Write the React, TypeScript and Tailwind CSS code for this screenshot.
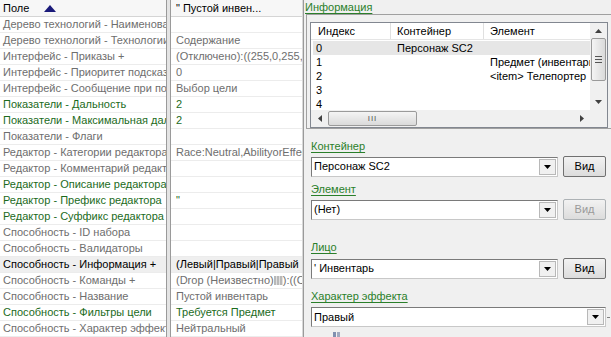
import React from 'react';

type Kind = 'gray' | 'green' | 'sel';

const rows: [string, React.ReactNode, Kind][] = [
  ['Дерево технологий - Наименование', '', 'gray'],
  ['Дерево технологий - Технологии', 'Содержание', 'gray'],
  ['Интерфейс - Приказы +', '(Отключено):((255,0,255,', 'gray'],
  ['Интерфейс - Приоритет подсказки', '0', 'gray'],
  ['Интерфейс - Сообщение при пол', 'Выбор цели', 'gray'],
  ['Показатели - Дальность', '2', 'green'],
  ['Показатели - Максимальная дальность', '2', 'green'],
  ['Показатели - Флаги', '', 'gray'],
  ['Редактор - Категории редактора', 'Race:Neutral,AbilityorEffect', 'gray'],
  ['Редактор - Комментарий редактора', '', 'gray'],
  ['Редактор - Описание редактора', '', 'green'],
  ['Редактор - Префикс редактора', '"', 'green'],
  ['Редактор - Суффикс редактора', '', 'green'],
  ['Способность - ID набора', '', 'gray'],
  ['Способность - Валидаторы', '', 'gray'],
  ['Способность - Информация +', '(Левый|Правый|Правый', 'sel'],
  [
    'Способность - Команды +',
    <>
      (Drop (Неизвестно)
      <span className="inline-block w-[9px] h-[9px] align-[-1px] bg-[repeating-linear-gradient(90deg,#b8b8b8_0px,#b8b8b8_2px,#e0e0e0_2px,#e0e0e0_3px)]" />
      ):((C
    </>,
    'gray',
  ],
  ['Способность - Название', 'Пустой инвентарь', 'gray'],
  ['Способность - Фильтры цели', 'Требуется Предмет', 'green'],
  ['Способность - Характер эффекта', 'Нейтральный', 'gray'],
];

const color = (k: Kind) =>
  k === 'green' ? 'text-[#1c6b1c]' : k === 'sel' ? 'text-black bg-[#efefef]' : 'text-[#6e6e6e]';

const Arrow = ({ dir }: { dir: 'up' | 'down' | 'left' | 'right' }) => {
  const pts = {
    up: '0,4 3.5,0 7,4',
    down: '0,0 3.5,4 7,0',
    left: '4,0 0,3.5 4,7',
    right: '0,0 4,3.5 0,7',
  }[dir];
  const vert = dir === 'up' || dir === 'down';
  return (
    <svg width={vert ? 7 : 4} height={vert ? 4 : 7} viewBox={vert ? '0 0 7 4' : '0 0 4 7'}>
      <polygon points={pts} fill="#404040" />
    </svg>
  );
};

const Combo = ({ value, wide }: { value: string; wide?: boolean }) => (
  <div className={`h-[20px] bg-white border border-[#7a7a7a] border-r-[#c8c8c8] border-b-[#c8c8c8] flex items-center ${wide ? 'w-[295px]' : 'w-[247px]'}`}>
    <div className="flex-1 pl-[2px] text-black whitespace-nowrap overflow-hidden">{value}</div>
    <div className="w-[17px] h-[16px] mr-[1px] bg-[#f0f0f0] border border-[#b8b8b8] flex items-center justify-center">
      <svg width="7" height="4" viewBox="0 0 7 4">
        <polygon points="0,0 3.5,4 7,0" fill="#000" />
      </svg>
    </div>
  </div>
);

const ViewBtn = ({ disabled }: { disabled?: boolean }) => (
  <div
    className={`w-[43px] h-[21px] rounded-[2px] border flex items-center justify-center bg-gradient-to-b from-[#f2f2f2] to-[#dcdcdc] ${
      disabled ? 'border-[#adb2b5] text-[#9a9a9a]' : 'border-[#707070] text-black'
    }`}
  >
    Вид
  </div>
);

const Label = ({ children }: { children: React.ReactNode }) => (
  <div className="h-[13px] leading-[13px] text-[#2a7f2a] underline underline-offset-2 decoration-[#2a7f2a]">{children}</div>
);

export default function App() {
  return (
    <div
      className="w-[611px] h-[337px] overflow-hidden flex bg-[#f0f0f0] text-[11px] leading-[15px]"
      style={{ fontFamily: '"Liberation Sans", Arial, sans-serif' }}
    >
      {/* property grid */}
      <div className="w-[302px] flex bg-white">
        <div className="w-[166px] flex flex-col">
          <div className="h-[17px] flex items-center pl-[3px] border-b border-[#d5d5d5] bg-[#f7f7f7] text-black">
            <span>Поле</span>
            <svg className="ml-[15px]" width="12" height="7" viewBox="0 0 12 7">
              <polygon points="0,7 6,0 12,7" fill="#1a1a7a" />
            </svg>
          </div>
          {rows.map(([name, , k], i) => (
            <div key={i} className={`h-[16px] pl-[3px] border-b border-[#ececec] whitespace-nowrap overflow-hidden ${color(k)}`}>
              {name}
            </div>
          ))}
        </div>
        <div className="w-[5px] border-l border-r border-[#9a9a9a] bg-[#e4e4e4]" />
        <div className="w-[131px] flex flex-col">
          <div className="h-[17px] flex items-center pl-[5px] border-b border-[#d5d5d5] bg-[#f7f7f7] text-black whitespace-nowrap overflow-hidden">
            " Пустой инвен...
          </div>
          {rows.map(([, val, k], i) => (
            <div key={i} className={`h-[16px] pl-[5px] border-b border-[#ececec] whitespace-nowrap overflow-hidden ${color(k)}`}>
              {val}
            </div>
          ))}
        </div>
      </div>
      <div className="w-[2px] bg-[#9a9a9a] border-l border-[#d8d8d8]" />

      {/* info panel */}
      <div className="flex-1 flex flex-col pl-[1px]">
        <div className="h-[14px] pt-[1px]">
          <Label>Информация</Label>
        </div>
        <div className="h-[116px] ml-[1px] border-l border-t border-b border-[#a0a0a0] pl-[3px] pt-[7px]">
          <div className="w-[298px] h-[106px] border border-[#828790] bg-white flex">
            <div className="flex-1 min-w-0 overflow-hidden flex flex-col">
              <div className="h-[17px] flex items-stretch border-b border-[#e5e5e5] text-black">
                <div className="w-[80px] shrink-0 pl-[7px] flex items-center border-r border-[#e0e0e0]">Индекс</div>
                <div className="w-[93px] shrink-0 pl-[6px] flex items-center border-r border-[#e0e0e0]">Контейнер</div>
                <div className="flex-1 pl-[6px] flex items-center whitespace-nowrap">Элемент</div>
              </div>
              <div className="flex-1 flex flex-col text-black leading-[14px] pt-[1px] overflow-hidden">
                <div className="h-[14px] flex bg-[#e6e6e6] ml-[2px]">
                  <div className="w-[78px] shrink-0 pl-[3px]">0</div>
                  <div className="w-[93px] shrink-0 pl-[6px] whitespace-nowrap">Персонаж SC2</div>
                  <div className="flex-1" />
                </div>
                <div className="h-[14px] flex ml-[2px]">
                  <div className="w-[78px] shrink-0 pl-[3px]">1</div>
                  <div className="w-[93px] shrink-0" />
                  <div className="flex-1 min-w-0 pl-[6px] whitespace-nowrap overflow-hidden">Предмет (инвентарь)</div>
                </div>
                <div className="h-[14px] flex ml-[2px]">
                  <div className="w-[78px] shrink-0 pl-[3px]">2</div>
                  <div className="w-[93px] shrink-0" />
                  <div className="flex-1 min-w-0 pl-[6px] whitespace-nowrap overflow-hidden">&lt;item&gt; Телепортер</div>
                </div>
                <div className="h-[14px] flex ml-[2px]">
                  <div className="w-[78px] pl-[3px]">3</div>
                </div>
                <div className="h-[14px] flex ml-[2px]">
                  <div className="w-[78px] pl-[3px]">4</div>
                </div>
              </div>
              {/* horizontal scrollbar */}
              <div className="h-[17px] shrink-0 bg-[#f0f0f0] flex items-center">
                <div className="w-[17px] flex items-center justify-center">
                  <Arrow dir="left" />
                </div>
                <div className="w-[89px] h-[15px] rounded-[2px] border border-[#9a9a9a] bg-gradient-to-b from-[#f4f4f4] to-[#dadada] flex items-center justify-center text-[8px] leading-[8px] tracking-[1px] text-[#555]">
                  III
                </div>
                <div className="flex-1" />
                <div className="w-[17px] flex items-center justify-center">
                  <Arrow dir="right" />
                </div>
              </div>
            </div>
            {/* vertical scrollbar */}
            <div className="w-[17px] shrink-0 flex flex-col bg-[#f0f0f0]">
              <div className="h-[15px] flex items-center justify-center">
                <Arrow dir="up" />
              </div>
              <div className="h-[43px] mx-[1px] rounded-[2px] border border-[#9a9a9a] bg-gradient-to-r from-[#f4f4f4] to-[#dadada] flex flex-col items-center justify-center gap-[2px]">
                <div className="w-[7px] h-[1px] bg-[#555]" />
                <div className="w-[7px] h-[1px] bg-[#555]" />
                <div className="w-[7px] h-[1px] bg-[#555]" />
              </div>
              <div className="flex-1" />
              <div className="h-[16px] flex items-center justify-center">
                <Arrow dir="down" />
              </div>
              <div className="h-[17px]" />
            </div>
          </div>
        </div>

        <div className="pl-[6px] flex flex-col">
          <div className="mt-[11px]">
            <Label>Контейнер</Label>
          </div>
          <div className="mt-[3px] flex items-center gap-[5px]">
            <Combo value="Персонаж SC2" />
            <ViewBtn />
          </div>
          <div className="mt-[6px]">
            <Label>Элемент</Label>
          </div>
          <div className="mt-[3px] flex items-center gap-[5px]">
            <Combo value="(Нет)" />
            <ViewBtn disabled />
          </div>
          <div className="mt-[21px]">
            <Label>Лицо</Label>
          </div>
          <div className="mt-[4px] flex items-center gap-[5px]">
            <Combo value="' Инвентарь" />
            <ViewBtn />
          </div>
          <div className="mt-[11px]">
            <Label>Характер эффекта</Label>
          </div>
          <div className="mt-[4px] flex items-center gap-[1px]">
            <Combo value="Правый" wide />
            <div className="w-[3px] h-[1px] bg-[#808080]" />
          </div>
          <div className="mt-[5px] ml-[22px] flex gap-[1px]">
            <div className="w-[3px] h-[6px] bg-[#8090b0]" />
            <div className="w-[3px] h-[6px] bg-[#a0aac0]" />
          </div>
        </div>
      </div>
    </div>
  );
}
